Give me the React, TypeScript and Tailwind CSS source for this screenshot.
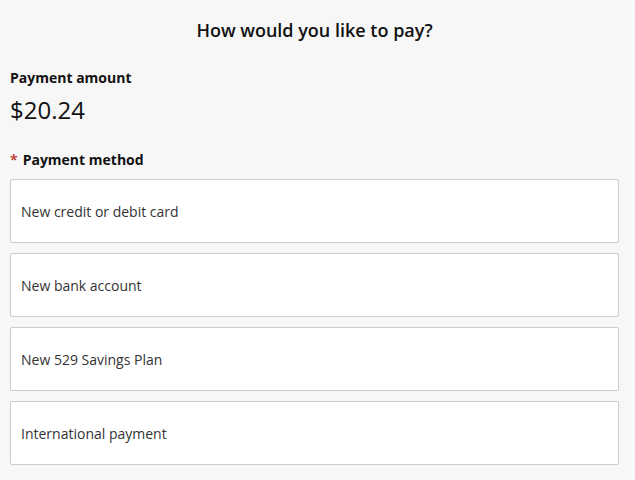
import React from 'react';

const METHODS = [
  'New credit or debit card',
  'New bank account',
  'New 529 Savings Plan',
  'International payment',
];

export default function App() {
  return (
    <div
      className="min-h-screen bg-[#f7f7f7] text-[#111] pl-[10px] pr-[16px]"
      style={{ fontFamily: '"Open Sans", "Noto Sans", sans-serif' }}
    >
      <h1 className="pt-[18px] h-[42px] text-center text-[18px] leading-[24px] font-semibold text-[#111]">
        How would you like to pay?
      </h1>

      <div className="mt-[26px] text-[14px] leading-[20px] font-bold">Payment amount</div>
      <div className="mt-[6px] text-[24px] leading-[32px]">$20.24</div>

      <div className="mt-[24px] text-[14px] leading-[20px] font-bold flex items-center gap-[5px]">
        <span className="text-[#c4463a]">*</span>
        <span>Payment method</span>
      </div>

      <div className="mt-[9px] flex flex-col gap-[10px]">
        {METHODS.map((m) => (
          <button
            key={m}
            className="h-[64px] w-full bg-white border border-[#cccccc] rounded-[2px] px-[10px] text-left text-[14px] text-[#333]"
          >
            {m}
          </button>
        ))}
      </div>
    </div>
  );
}
